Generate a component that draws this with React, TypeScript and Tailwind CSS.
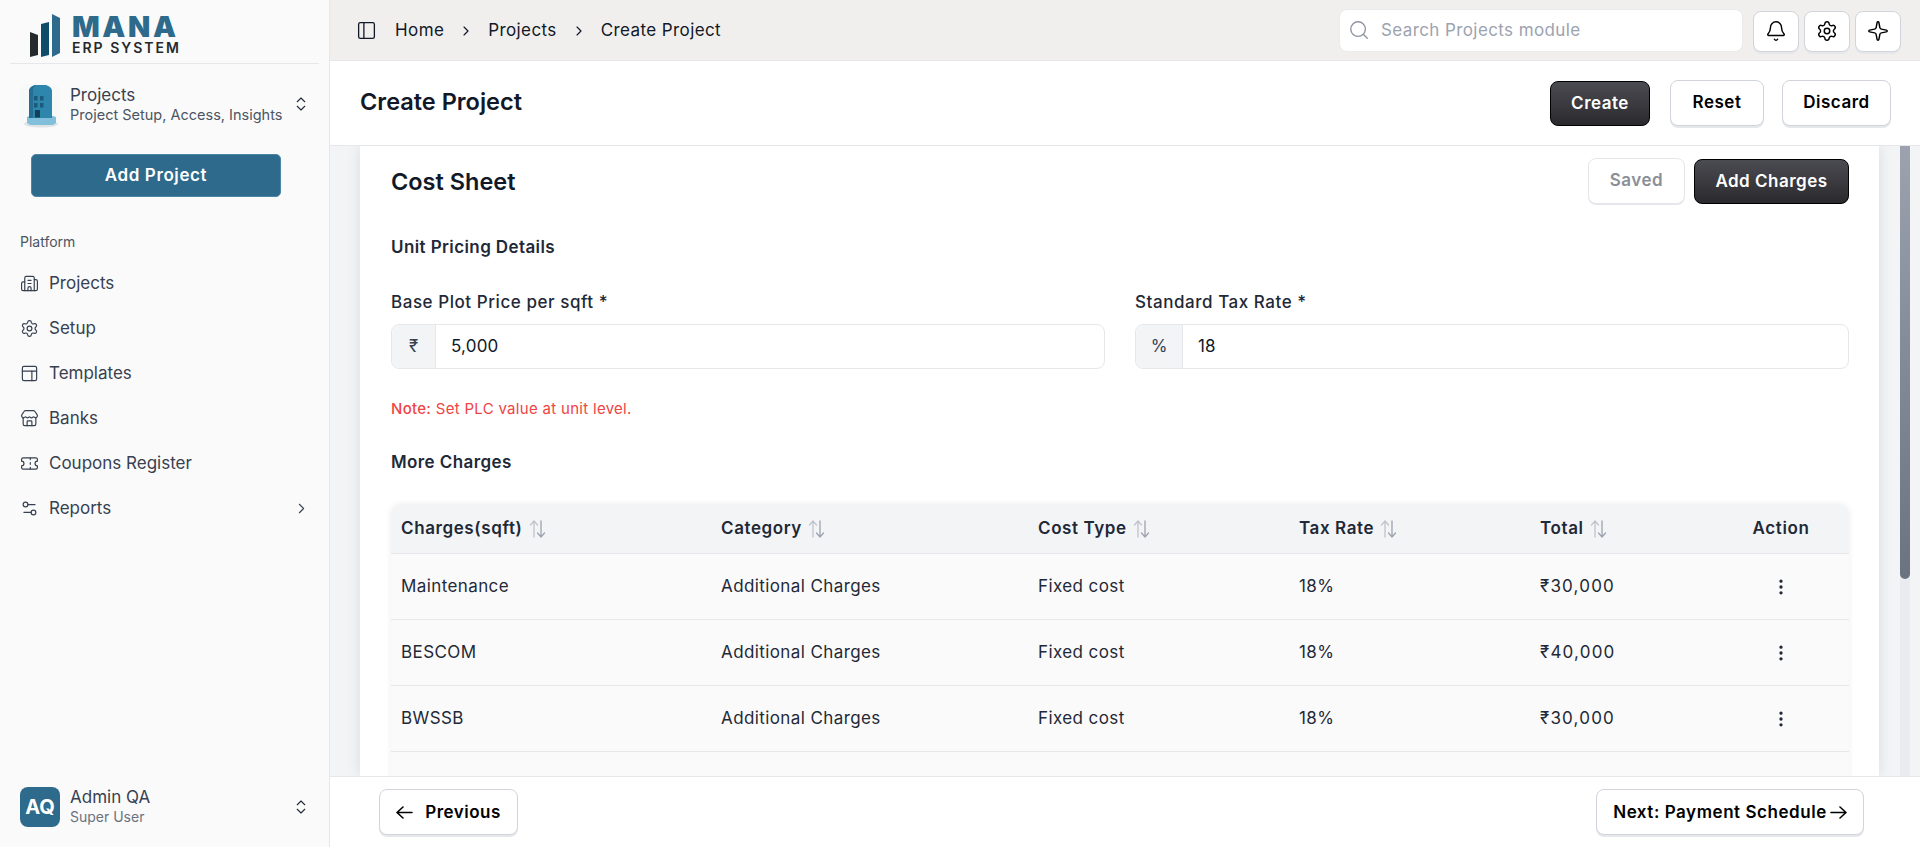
import { Bell, Building2, ChevronRight, ChevronsUpDown, EllipsisVertical, PanelLeft, PanelsTopLeft, Search, Settings, Settings2, Sparkle, Store, Ticket } from "lucide-react";

const navItems = [
  { label: "Projects", icon: Building2 },
  { label: "Setup", icon: Settings },
  { label: "Templates", icon: PanelsTopLeft },
  { label: "Banks", icon: Store },
  { label: "Coupons Register", icon: Ticket },
  { label: "Reports", icon: Settings2 },
];

const columns = [
  { label: "Charges(sqft)", width: "w-[320px]" },
  { label: "Category", width: "w-[317px]" },
  { label: "Cost Type", width: "w-[261px]" },
  { label: "Tax Rate", width: "w-[241px]" },
  { label: "Total", width: "w-[183px]" },
];

const rows = [
  { name: "Maintenance", total: "₹30,000" },
  { name: "BESCOM", total: "₹40,000" },
  { name: "BWSSB", total: "₹30,000" },
];

function Logo() {
  return (
    <div className="flex items-start h-[64px] mx-[10px] border-b border-[#e5e7eb] pl-5 pt-[14px]">
      <svg width="30" height="44" viewBox="0 0 30 44" className="shrink-0">
        <polygon points="0,18 8,21 8,41 0,43" fill="#252a2c" />
        <polygon points="11,10 19,8 19,41 11,43" fill="#0f4c68" />
        <polygon points="22,0 30,4 30,39 22,43" fill="#2d6a8c" />
      </svg>
      <div className="ml-[12px] flex flex-col pt-[2px]">
        <span className="text-[29px] leading-[22px] font-black tracking-[2.6px] text-[#2d6a8c]">MANA</span>
        <span className="mt-[3px] text-[14px] leading-[14px] font-semibold tracking-[2px] text-[#252a2c]">ERP SYSTEM</span>
      </div>
    </div>
  );
}

function BuildingPicture() {
  return (
    <svg width="40" height="44" viewBox="0 0 40 44" className="shrink-0">
      <rect x="0" y="0" width="40" height="44" rx="8" fill="#f7f8f8" />
      <ellipse cx="21" cy="40" rx="17" ry="3.5" fill="#dfe3e5" />
      <path d="M7 33l2-1h24l3 1v6l-3 2H10l-3-2z" fill="#82bfdb" />
      <path d="M9 34V7c0-3 3-5 6-6h11c3 1 6 3 6 6v27z" fill="#2f86ad" />
      <path d="M9 34V7c0-3 3-5 6-6h1c-2 1-3 3-3 6v27z" fill="#256f94" />
      <rect x="14" y="12" width="3.5" height="4.5" fill="#1a5a7a" />
      <rect x="20" y="12" width="3.5" height="4.5" fill="#1a5a7a" />
      <rect x="14" y="19" width="3.5" height="4.5" fill="#1a5a7a" />
      <rect x="20" y="19" width="3.5" height="4.5" fill="#1a5a7a" />
      <rect x="15" y="26" width="5" height="7.5" fill="#133f58" />
    </svg>
  );
}

function Sidebar() {
  return (
    <aside className="w-[330px] shrink-0 h-full flex flex-col bg-[#fafafa] border-r border-[#e5e7eb]">
      <Logo />
      <div className="flex items-center pl-5 pr-[19px] mt-[20px]">
        <BuildingPicture />
        <div className="ml-[10px] flex-1 -mt-[2px]">
          <div className="text-[17px] leading-[20px] text-[#374151]">Projects</div>
          <div className="text-[14.5px] leading-[20px] text-[#4b5563]">Project Setup, Access, Insights</div>
        </div>
        <ChevronsUpDown size={18} strokeWidth={1.5} className="text-[#1f2937] -mt-[5px]" />
      </div>
      <button className="mt-[26px] ml-[31px] w-[250px] h-[43px] rounded-[5px] bg-[#2d6a8c] border border-[#4c86a6] text-white text-[17px] tracking-[0.6px] font-semibold">
        Add Project
      </button>
      <div className="ml-[20px] mt-[35px] text-[14px] leading-[20px] text-[#4b5563]">Platform</div>
      <nav className="mt-[9px] flex flex-col">
        {navItems.map((item) => (
          <div key={item.label} className="h-[45px] flex items-center pl-[20px] pr-[19px] text-[17px] text-[#374151]">
            <item.icon size={19} strokeWidth={1.5} className={item.label === "Templates" ? "-scale-x-100" : ""} />
            <span className="ml-[10px] flex-1">{item.label}</span>
            {item.label === "Reports" && <ChevronRight size={17} strokeWidth={1.5} />}
          </div>
        ))}
      </nav>
      <div className="mt-auto flex items-center pl-5 pr-[19px] pb-5">
        <div className="w-10 h-10 rounded-lg bg-[#2d6a8c] flex items-center justify-center text-white text-[20px] font-bold">AQ</div>
        <div className="ml-[10px] flex-1">
          <div className="text-[17px] leading-[20px] text-[#374151]">Admin QA</div>
          <div className="text-[14px] leading-[20px] text-[#6b7280]">Super User</div>
        </div>
        <ChevronsUpDown size={18} strokeWidth={1.5} className="text-[#1f2937]" />
      </div>
    </aside>
  );
}

function IconButton({ icon: Icon }: { icon: typeof Bell }) {
  return (
    <button className="w-[46px] h-[41px] rounded-lg bg-white border border-[#d1d5db] shadow-[0_2px_0_#e5e7eb] flex items-center justify-center text-black">
      <Icon size={22} strokeWidth={1.6} />
    </button>
  );
}

function TopBar() {
  return (
    <header className="h-[61px] shrink-0 bg-[#f1efee] border-b border-[#e5e7eb] flex items-center pl-[26px] pr-[19px]">
      <PanelLeft size={21} strokeWidth={1.5} className="text-[#111827]" />
      <div className="ml-[18px] pt-px flex items-center text-[17px] tracking-[0.4px] text-[#111827]">
        <span>Home</span>
        <ChevronRight size={16} strokeWidth={1.75} className="mx-[14px]" />
        <span>Projects</span>
        <ChevronRight size={16} strokeWidth={1.75} className="mx-[14px]" />
        <span>Create Project</span>
      </div>
      <div className="ml-auto w-[404px] h-[43px] rounded-lg bg-white border border-[#ebebeb] flex items-center pl-[8px]">
        <Search size={22} strokeWidth={1.5} className="text-[#8f95a0]" />
        <span className="ml-[11px] pt-px text-[17px] tracking-[0.4px] text-[#9ca3af]">Search Projects module</span>
      </div>
      <div className="ml-[10px] mt-[2px] flex gap-[5px]">
        <IconButton icon={Bell} />
        <IconButton icon={Settings} />
        <IconButton icon={Sparkle} />
      </div>
    </header>
  );
}

function DarkButton({ children, className }: { children: string; className: string }) {
  return (
    <button className={`h-[45px] pt-px rounded-lg border border-black bg-linear-to-b from-[#4b4b52] to-[#2a2a2e] text-white text-[17px] tracking-[0.5px] font-semibold ${className}`}>
      {children}
    </button>
  );
}

function LightButton({ children, className }: { children: string; className: string }) {
  return (
    <button className={`h-[46px] rounded-lg bg-white border border-[#d1d5db] shadow-[0_2px_0_#e5e7eb] text-black text-[17px] tracking-[0.5px] font-semibold ${className}`}>
      {children}
    </button>
  );
}

function TitleBar() {
  return (
    <div className="relative z-10 h-[85px] shrink-0 bg-white border-b border-[#e5e7eb] flex items-center pl-[30px] pr-[29px]">
      <h1 className="text-[23.5px] font-semibold text-[#111827] -mt-[2px]">Create Project</h1>
      <div className="ml-auto flex items-center">
        <DarkButton className="w-[100px]">Create</DarkButton>
        <LightButton className="w-[94px] ml-5">Reset</LightButton>
        <LightButton className="w-[109px] ml-[18px]">Discard</LightButton>
      </div>
    </div>
  );
}

function PriceField({ label, prefix, prefixWidth, value }: { label: string; prefix: string; prefixWidth: string; value: string }) {
  return (
    <div>
      <div className="text-[17px] leading-[20px] tracking-[0.55px] font-medium text-[#1f2937]">{label}</div>
      <div className="mt-[12px] h-[45px] flex rounded-lg border border-[#e5e7eb] overflow-hidden bg-white">
        <div className={`${prefixWidth} bg-[#f3f4f6] border-r border-[#e5e7eb] flex items-center justify-center text-[17px] text-[#374151]`}>{prefix}</div>
        <div className="pl-[15px] pt-px flex items-center text-[17px] tracking-[0.2px] text-[#111827]">{value}</div>
      </div>
    </div>
  );
}

function SortIcon() {
  return (
    <svg width="18" height="18" viewBox="0 0 18 18" fill="none" strokeWidth="1.3" strokeLinecap="round" strokeLinejoin="round">
      <path d="M5 17V1M1.5 5 5 1l3.5 4" stroke="#bfc4cc" />
      <path d="M12 1v16M8.5 13l3.5 4 3.5-4" stroke="#9ca3af" />
    </svg>
  );
}

function ChargesTable() {
  return (
    <div className="mt-[32px] rounded-t-[10px] shadow-[0_0_6px_rgba(0,0,0,0.08)] overflow-hidden">
      <div className="h-[50px] pt-px flex items-center bg-[#f3f4f6] border-b border-[#e5e7eb] pl-[10px] text-[17px] tracking-[0.6px] font-semibold text-[#1f2937]">
        {columns.map((col) => (
          <div key={col.label} className={`${col.width} flex items-center gap-[6px]`}>
            {col.label}
            <SortIcon />
          </div>
        ))}
        <div className="w-[116px] text-center">Action</div>
      </div>
      {rows.map((row) => (
        <div key={row.name} className="h-[66px] pt-px flex items-center bg-[#fafafa] border-b border-[#e5e7eb] pl-[10px] text-[17px] tracking-[0.4px] text-[#1f2937]">
          <div className={columns[0].width}>{row.name}</div>
          <div className={columns[1].width}>Additional Charges</div>
          <div className={columns[2].width}>Fixed cost</div>
          <div className={columns[3].width}>18%</div>
          <div className={`${columns[4].width} tracking-[1.2px]`}>{row.total}</div>
          <div className="w-[116px] flex justify-center">
            <EllipsisVertical size={20} className="text-[#1f2937]" />
          </div>
        </div>
      ))}
      <div className="h-[66px] bg-[#fafafa]" />
    </div>
  );
}

function CostSheet() {
  return (
    <section className="h-full w-[1519px] bg-white pl-[31px] pr-[30px] pt-[13px] overflow-hidden shadow-[0_0_14px_rgba(0,0,0,0.1)]">
      <div className="flex items-center">
        <h2 className="text-[23.5px] font-semibold text-[#111827]">Cost Sheet</h2>
        <div className="ml-auto -mt-px flex items-center gap-[9px]">
          <button className="w-[97px] h-[46px] rounded-lg bg-white border border-[#e5e7eb] shadow-[0_1px_0_#e5e7eb] text-[#8b8f96] text-[17px] tracking-[0.5px] font-semibold">Saved</button>
          <DarkButton className="w-[155px]">Add Charges</DarkButton>
        </div>
      </div>
      <div className="mt-[33px] text-[17px] leading-[20px] tracking-[0.4px] font-semibold text-[#1f2937]">Unit Pricing Details</div>
      <div className="mt-[35px] grid grid-cols-2 gap-[30px]">
        <PriceField label="Base Plot Price per sqft *" prefix="₹" prefixWidth="w-[44px]" value="5,000" />
        <PriceField label="Standard Tax Rate *" prefix="%" prefixWidth="w-[47px]" value="18" />
      </div>
      <div className="mt-[30px] text-[15px] leading-[20px] tracking-[0.3px] text-[#ef4444]">
        <span className="font-medium">Note:</span> Set PLC value at unit level.
      </div>
      <div className="mt-[33px] text-[17px] leading-[20px] tracking-[0.4px] font-semibold text-[#1f2937]">More Charges</div>
      <ChargesTable />
    </section>
  );
}

function ContentArea() {
  return (
    <div className="flex-1 min-h-0 flex bg-[#f3f4f6] pl-[30px]">
      <CostSheet />
      <div className="flex-1 pl-[21px]">
        <div className="w-[10px] h-full bg-[#e9ebee]">
          <div className="h-[433px] bg-linear-to-b from-[#9ca3af] to-[#6b7280] rounded-b-full" />
        </div>
      </div>
    </div>
  );
}

function FooterBar() {
  return (
    <footer className="relative z-10 h-[71px] shrink-0 bg-white border-t border-[#e5e7eb] flex items-start pt-[12px] pl-[49px] pr-[56px] justify-between">
      <button className="w-[139px] h-[46px] pt-px rounded-lg bg-white border border-[#d1d5db] shadow-[0_2px_0_#e5e7eb] flex items-center justify-center gap-[12px] text-[17px] tracking-[0.5px] font-semibold text-black">
        <svg width="17" height="13" viewBox="0 0 17 13" fill="none" stroke="currentColor" strokeWidth="1.6" strokeLinecap="round" strokeLinejoin="round">
          <path d="M16 6.5H1M7 1 1 6.5 7 12" />
        </svg>
        Previous
      </button>
      <button className="w-[268px] h-[46px] pt-px rounded-lg bg-white border border-[#d1d5db] shadow-[0_2px_0_#e5e7eb] flex items-center justify-center gap-[3px] text-[17px] tracking-[0.55px] font-semibold text-black">
        Next: Payment Schedule
        <svg width="17" height="13" viewBox="0 0 17 13" fill="none" stroke="currentColor" strokeWidth="1.6" strokeLinecap="round" strokeLinejoin="round">
          <path d="M1 6.5h15M10 1l6 5.5-6 5.5" />
        </svg>
      </button>
    </footer>
  );
}

export default function App() {
  return (
    <div className="w-[1920px] h-[847px] flex overflow-hidden font-[Inter,sans-serif]">
      <Sidebar />
      <main className="flex-1 min-w-0 flex flex-col">
        <TopBar />
        <TitleBar />
        <ContentArea />
        <FooterBar />
      </main>
    </div>
  );
}
